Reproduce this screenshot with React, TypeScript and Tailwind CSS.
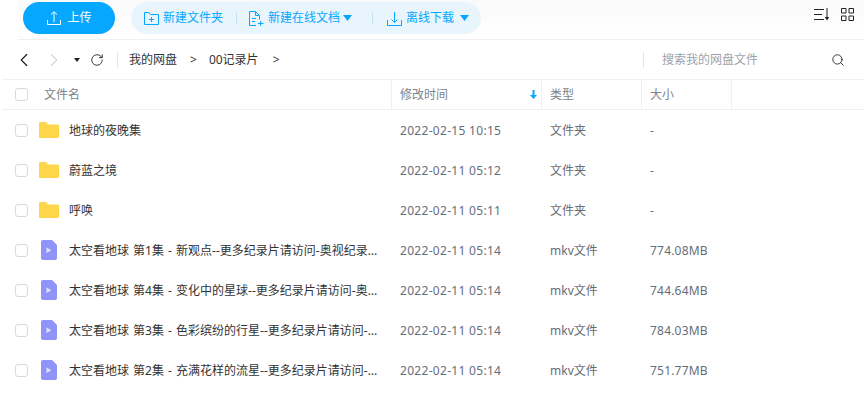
import { ChevronLeft, ChevronRight, RotateCw, Search } from "lucide-react";

const files = [
  { name: "地球的夜晚集", time: "2022-02-15 10:15", type: "文件夹", size: "-", folder: true },
  { name: "蔚蓝之境", time: "2022-02-11 05:12", type: "文件夹", size: "-", folder: true },
  { name: "呼唤", time: "2022-02-11 05:11", type: "文件夹", size: "-", folder: true },
  { name: "太空看地球 第1集 - 新观点--更多纪录片请访问-奥视纪录片网.mkv", time: "2022-02-11 05:14", type: "mkv文件", size: "774.08MB", folder: false },
  { name: "太空看地球 第4集 - 变化中的星球--更多纪录片请访问-奥视纪录片网.mkv", time: "2022-02-11 05:14", type: "mkv文件", size: "744.64MB", folder: false },
  { name: "太空看地球 第3集 - 色彩缤纷的行星--更多纪录片请访问-奥视纪录片网.mkv", time: "2022-02-11 05:14", type: "mkv文件", size: "784.03MB", folder: false },
  { name: "太空看地球 第2集 - 充满花样的流星--更多纪录片请访问-奥视纪录片网.mkv", time: "2022-02-11 05:14", type: "mkv文件", size: "751.77MB", folder: false },
];

function FolderIcon() {
  return (
    <svg width="20" height="16" viewBox="0 0 20 16">
      <path d="M0 1.2C0 .5.5 0 1.2 0h5.3c.4 0 .7.1 1 .4L9.800 2.600H18.800c.7 0 1.200.5 1.200 1.200v11c0 .7-.5 1.200-1.200 1.200H1.200C.5 16 0 15.500 0 14.800Z" fill="#ffd54a" />
      <path d="M7.500.4 9.800 2.600h-3Z" fill="#ffe48a" />
    </svg>
  );
}

function VideoIcon() {
  return (
    <svg width="16" height="20" viewBox="0 0 16 20">
      <path d="M2 0h8.500c.5 0 .9.2 1.200.5l3.800 4c.3.3.5.7.5 1.200V18c0 1.100-.9 2-2 2H2c-1.100 0-2-.9-2-2V2C0 .9.900 0 2 0Z" fill="#9094f8" />
      <path d="M5.500 7.500v5.500l4.800-2.750Z" fill="#e4e5ff" />
    </svg>
  );
}

function Checkbox() {
  return <div className="h-[13px] w-[13px] rounded-[3px] border border-[#d9d9d9] bg-white" />;
}

function Divider() {
  return <div className="h-3 w-px bg-[#c5e2f5]" />;
}

function Caret() {
  return (
    <svg width="9" height="6" viewBox="0 0 9 6">
      <path d="M0 0h9L4.500 6Z" fill="#06a7ff" />
    </svg>
  );
}

export default function App() {
  return (
    <div
      className="h-[415px] w-[864px] overflow-hidden bg-white pl-[2px] text-[12px] text-[#666d78]"
      style={{ fontFamily: '"Noto Sans", "Noto Sans CJK SC", sans-serif' }}
    >
      {/* toolbar */}
      <div className="ml-4 flex h-10 items-start border-b border-[#f0f0f0] bg-gradient-to-b from-[#fafafa] to-white pt-[2px]">
        <button className="ml-[5px] flex h-8 w-[92px] items-center justify-center gap-[6px] rounded-full bg-[#06a7ff] pl-[1px] text-[12px] text-white">
          <svg width="14" height="14" viewBox="0 0 14 14" fill="none" stroke="#fff" strokeWidth="1">
            <path d="M.5 9v4.500h13V9M7 11V1M4 3.500 7 .8l3 2.700" />
          </svg>
          上传
        </button>
        <div className="ml-4 flex h-8 w-[350px] items-center rounded-full bg-[#e9f5fd] text-[12px] text-[#06a7ff]">
          <svg className="ml-[13px]" width="15" height="13" viewBox="0 0 15 13" fill="none" stroke="#06a7ff">
            <path d="M.5 12.500V.5h4.500l1.500 2h8v10ZM5 7.500h5M7.500 5v5" />
          </svg>
          <span className="ml-1">新建文件夹</span>
          <div className="ml-[13px] mr-[12px]"><Divider /></div>
          <svg width="15" height="15" viewBox="0 0 15 15" fill="none" stroke="#06a7ff">
            <path d="M7 14.500H.5V.5h6l4 4v4M6.500.5v4h4M3 7.500h4M3 10.500h3M9 12.500h5.500M11.700 10v5" />
          </svg>
          <span className="ml-[4px]">新建在线文档</span>
          <div className="ml-[3px]"><Caret /></div>
          <div className="ml-[20px] mr-[14px]"><Divider /></div>
          <svg width="15" height="15" viewBox="0 0 15 15" fill="none" stroke="#06a7ff">
            <path d="M.5 9v5.500h14V9M7.500 1v10M4.500 8.500l3 3 3-3" />
          </svg>
          <span className="ml-[4px]">离线下载</span>
          <div className="ml-[6px]"><Caret /></div>
        </div>
        <div className="ml-auto mr-[10px] mt-[6px] flex items-center gap-[11px]">
          <svg width="16" height="13" viewBox="0 0 16 13" fill="none" stroke="#222">
            <path d="M0 1.500h10M0 6.500h8M0 11.500h10M13 0v11" />
            <path d="M10.800 9h4.400L13 12.500Z" fill="#222" stroke="none" />
          </svg>
          <svg width="13" height="13" viewBox="0 0 13 13" fill="none" stroke="#222">
            <path d="M.5.500h4.500V5H.5ZM8 .500h4.500V5H8ZM.5 8H5v4.500H.5ZM8 8h4.500v4.500H8Z" />
          </svg>
        </div>
      </div>

      {/* path bar */}
      <div className="flex h-10 items-center border-b border-[#f0f0f0] text-[#333]">
        <ChevronLeft className="ml-[11px]" size={22} strokeWidth={1.3} color="#222" />
        <ChevronRight className="ml-[8px]" size={22} strokeWidth={1} color="#b5b5b5" />
        <svg className="ml-[9px]" width="6" height="4" viewBox="0 0 6 4">
          <path d="M0 0h6L3 4Z" fill="#222" />
        </svg>
        <RotateCw className="ml-[10px]" size={14} strokeWidth={1.5} color="#222" />
        <div className="ml-[13px] h-4 w-px bg-[#e5e5e5]" />
        <span className="ml-[11px] pt-[1px]">我的网盘</span>
        <span className="ml-[13px] pt-[1px]">&gt;</span>
        <span className="ml-[12px] pt-[1px]">00记录片</span>
        <span className="ml-[14px] pt-[1px]">&gt;</span>
        <div className="ml-auto flex h-4 w-[221px] items-center border-l border-[#e5e5e5] pl-[18px] text-[#9ba3ad]">
          <span className="pt-[1px]">搜索我的网盘文件</span>
          <Search className="ml-auto mr-[19px]" size={14} strokeWidth={1.5} color="#222" />
        </div>
      </div>

      {/* column headers */}
      <div className="flex h-[30px] items-center border-b border-[#f0f0f0] text-[#7b828c]">
        <div className="flex w-[390px] items-center self-stretch border-r border-[#f0f0f0] pl-[13px]">
          <Checkbox />
          <span className="ml-[16px]">文件名</span>
        </div>
        <div className="flex w-[150px] items-center self-stretch border-r border-[#f0f0f0] pl-2">
          修改时间
          <svg className="ml-auto mr-[4px]" width="7" height="9" viewBox="0 0 7 9">
            <path d="M2.500 0h2v5H7L3.500 9 0 5h2.500Z" fill="#06a7ff" />
          </svg>
        </div>
        <div className="flex w-[100px] items-center self-stretch border-r border-[#f0f0f0] pl-2">类型</div>
        <div className="flex w-[90px] items-center self-stretch border-r border-[#f0f0f0] pl-2">大小</div>
      </div>

      {/* file rows */}
      {files.map((f) => (
        <div key={f.name} className="flex h-10 items-center">
          <div className="ml-[13px] w-[23px]"><Checkbox /></div>
          <div className="flex w-[22px] justify-center">
            {f.folder ? <FolderIcon /> : <VideoIcon />}
          </div>
          <div className="ml-[9px] w-[315px] truncate pr-[1px] pt-[1px] text-[#333] [word-spacing:1px]">{f.name}</div>
          <div className="ml-[16px] w-[150px] pt-[1px] tracking-[0.3px]">{f.time}</div>
          <div className="w-[100px] pt-[1px]">{f.type}</div>
          <div className="pt-[1px] tracking-[0.2px]">{f.size}</div>
        </div>
      ))}
    </div>
  );
}
